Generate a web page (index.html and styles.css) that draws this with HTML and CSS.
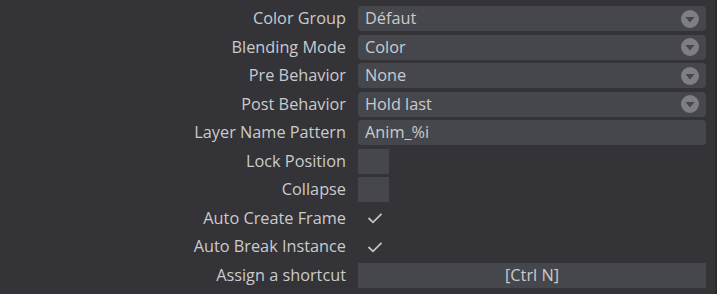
FILE: index.html
```html
<!DOCTYPE html>
<html>
<head>
<meta charset="utf-8">
<link rel="stylesheet" href="styles.css">
</head>
<body>
<div class="panel">
  <div class="form">
    <div class="label">Color Group</div>
    <div class="select"><span>Défaut</span><svg class="arrow" viewBox="0 0 18 18" width="18" height="18"><circle cx="9" cy="9" r="9" fill="#7f7f83"/><path d="M4.5 7 H13.5 L9 12.5 Z" fill="#46474c"/></svg></div>

    <div class="label">Blending Mode</div>
    <div class="select"><span>Color</span><svg class="arrow" viewBox="0 0 18 18" width="18" height="18"><circle cx="9" cy="9" r="9" fill="#7f7f83"/><path d="M4.5 7 H13.5 L9 12.5 Z" fill="#46474c"/></svg></div>

    <div class="label">Pre Behavior</div>
    <div class="select"><span>None</span><svg class="arrow" viewBox="0 0 18 18" width="18" height="18"><circle cx="9" cy="9" r="9" fill="#7f7f83"/><path d="M4.5 7 H13.5 L9 12.5 Z" fill="#46474c"/></svg></div>

    <div class="label">Post Behavior</div>
    <div class="select"><span>Hold last</span><svg class="arrow" viewBox="0 0 18 18" width="18" height="18"><circle cx="9" cy="9" r="9" fill="#7f7f83"/><path d="M4.5 7 H13.5 L9 12.5 Z" fill="#46474c"/></svg></div>

    <div class="label">Layer Name Pattern</div>
    <div class="input">Anim_%i</div>

    <div class="label">Lock Position</div>
    <div class="cell"><div class="box"></div></div>

    <div class="label">Collapse</div>
    <div class="cell"><div class="box"></div></div>

    <div class="label">Auto Create Frame</div>
    <div class="cell"><svg class="check" viewBox="0 0 16 12" width="16" height="12"><path d="M1.5 6 L6 10.3 L14.5 1.8" fill="none" stroke="#c4c4c6" stroke-width="1.8"/></svg></div>

    <div class="label">Auto Break Instance</div>
    <div class="cell"><svg class="check" viewBox="0 0 16 12" width="16" height="12"><path d="M1.5 6 L6 10.3 L14.5 1.8" fill="none" stroke="#c4c4c6" stroke-width="1.8"/></svg></div>

    <div class="label">Assign a shortcut</div>
    <div class="shortcut">[Ctrl N]</div>
  </div>
</div>
</body>
</html>
```

FILE: styles.css
```css
html, body {
  margin: 0;
  padding: 0;
  background: #333338;
}
body {
  width: 717px;
  height: 294px;
  overflow: hidden;
  font-family: "Open Sans", "Liberation Sans", sans-serif;
  font-size: 16.3px;
  color: #cbcbcd;
}
.panel {
  height: 294px;
  box-sizing: border-box;
  border-right: 2px solid #2c2c30;
  padding: 6px 9px 0 0;
  width: 717px;
}
.form {
  display: grid;
  grid-template-columns: 346px 348px;
  column-gap: 12px;
  grid-auto-rows: 25px;
  row-gap: 3.5px;
}
.label {
  text-align: right;
  line-height: 25px;
  white-space: nowrap;
}
.select, .input {
  background: #46474c;
  border-radius: 4px;
  display: flex;
  align-items: center;
  padding-left: 7px;
  padding-right: 7px;
  line-height: 25px;
}
.select span { flex: 1; }
.arrow { display: block; }
.cell {
  display: flex;
  align-items: center;
}
.box {
  width: 31px;
  height: 25px;
  background: #46474c;
}
.check {
  display: block;
  margin-left: 9px;
}
.shortcut {
  background: #46474c;
  text-align: center;
  line-height: 25px;
}
```
